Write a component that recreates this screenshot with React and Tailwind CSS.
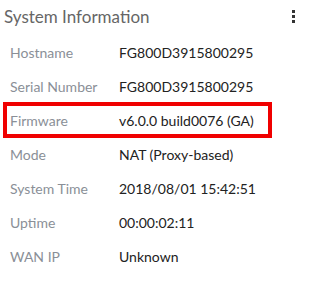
import React from 'react';

const rows = [
  { label: 'Hostname', value: 'FG800D3915800295' },
  { label: 'Serial Number', value: 'FG800D3915800295' },
  { label: 'Firmware', value: 'v6.0.0 build0076 (GA)', highlight: true },
  { label: 'Mode', value: 'NAT (Proxy-based)' },
  { label: 'System Time', value: '2018/08/01 15:42:51' },
  { label: 'Uptime', value: '00:00:02:11' },
  { label: 'WAN IP', value: 'Unknown' },
];

const App = () => {
  return (
    <div className="w-[316px] h-[291px] bg-white overflow-hidden" style={{ fontFamily: 'Lato, "Open Sans", sans-serif' }}>
      {/* header */}
      <div className="flex items-center justify-between h-[32px] pl-[4px] pr-[21px]">
        <h2 className="text-[17px] text-[#666] leading-none">System Information</h2>
        <div className="flex flex-col gap-[2px]">
          <span className="w-[3px] h-[3px] bg-[#333]" />
          <span className="w-[3px] h-[3px] bg-[#333]" />
          <span className="w-[3px] h-[3px] bg-[#333]" />
        </div>
      </div>

      {/* rows */}
      <div className="pt-[3px]">
        {rows.map((row) => (
          <div key={row.label} className="relative flex items-center h-[34px] pl-[10px] text-[14px]">
            <span className="w-[109px] text-[#8a8f97]">{row.label}</span>
            <span className="text-[#222]">{row.value}</span>
            {row.highlight && (
              <span className="absolute -top-[1px] left-[3px] w-[269px] h-[36px] border-4 border-[#f00000]" />
            )}
          </div>
        ))}
      </div>
    </div>
  );
};

export default App;
